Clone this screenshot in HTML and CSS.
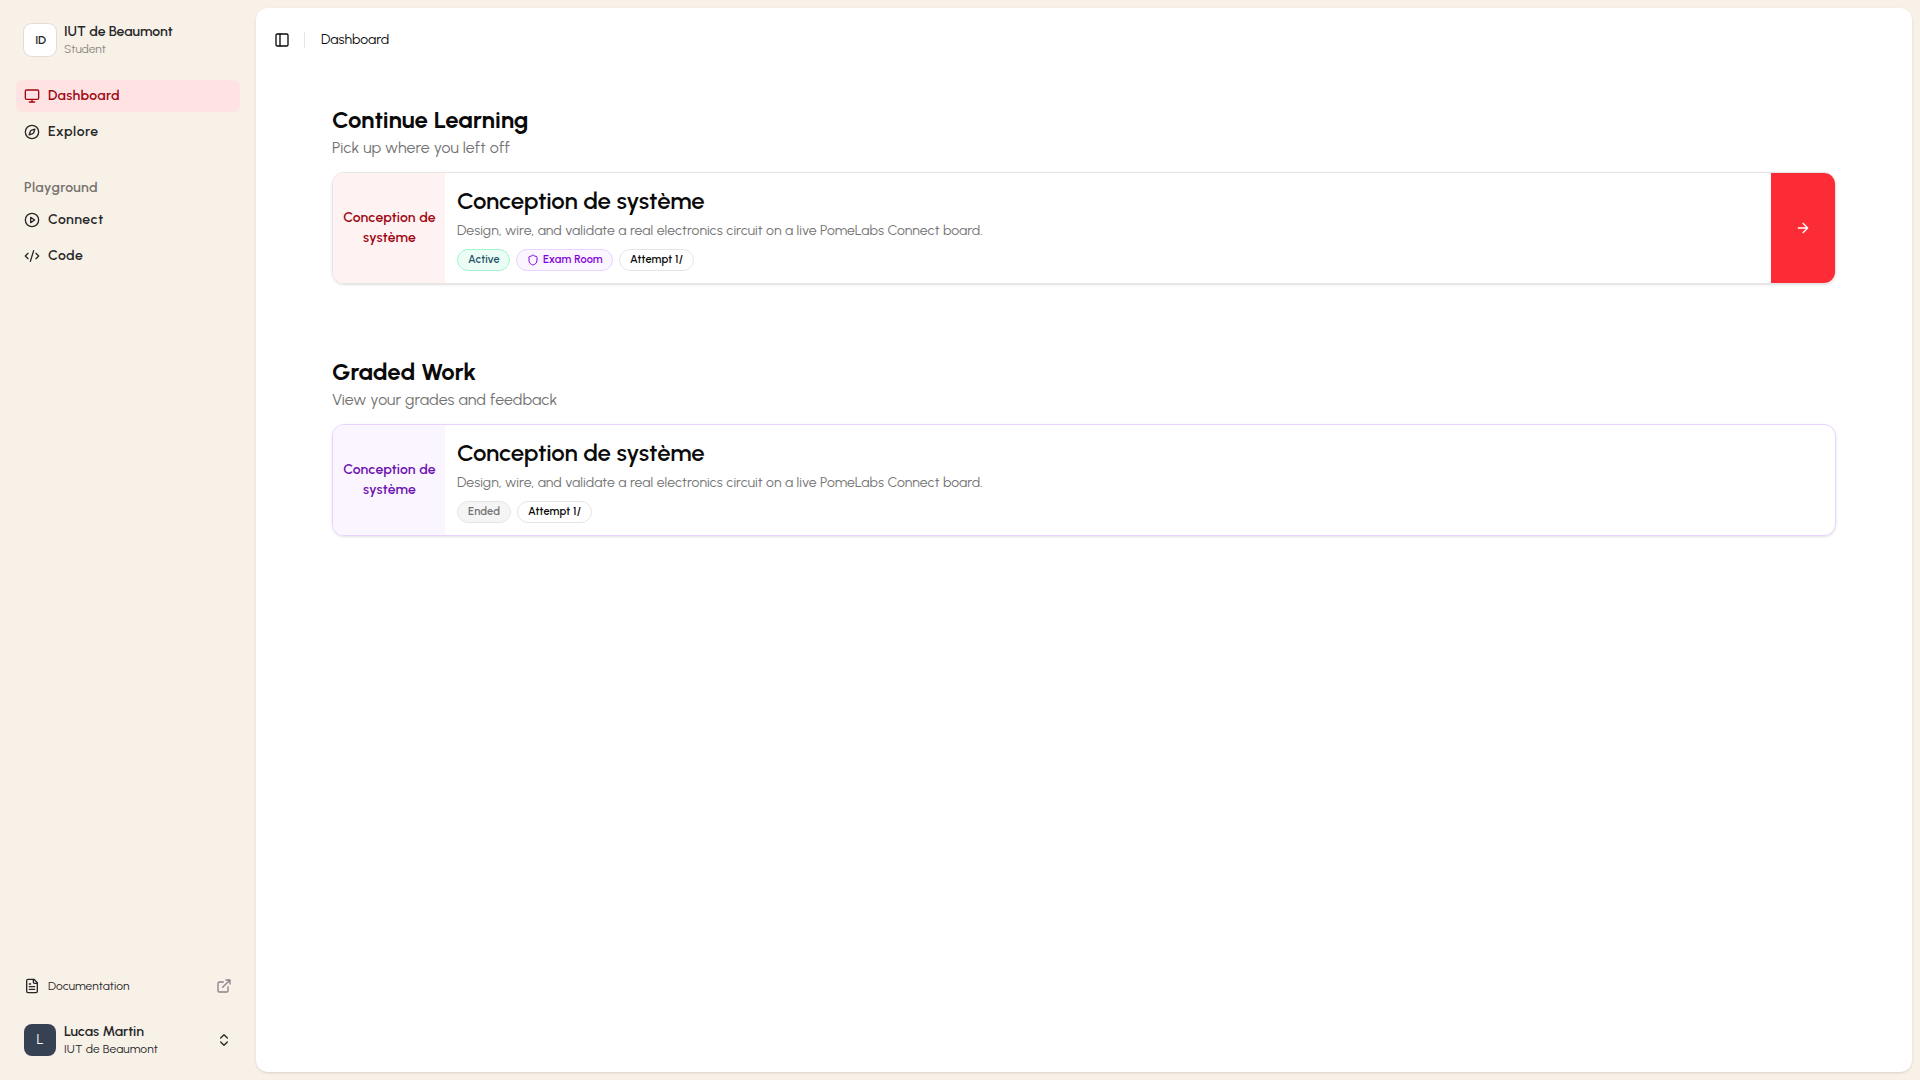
FILE: index.html
```
<!DOCTYPE html>
<html lang="en">
<head>
  <meta charset="UTF-8" />
  <title>Dashboard</title>
  <link rel="stylesheet" href="styles.css">
</head>
<body>
  <aside class="sidebar">
    <div class="org">
      <div class="org-logo">ID</div>
      <div class="who">
        <span class="who-name">IUT de Beaumont</span>
        <span class="who-sub muted">Student</span>
      </div>
    </div>

    <nav class="nav">
      <a class="nav-item active">
        <svg class="icon" viewBox="0 0 24 24"><rect width="20" height="14" x="2" y="3" rx="2"/><path d="M8 21h8M12 17v4"/></svg>
        <span>Dashboard</span>
      </a>
      <a class="nav-item explore">
        <svg class="icon" viewBox="0 0 24 24"><path d="m16.24 7.76-1.804 5.411a2 2 0 0 1-1.265 1.265L7.76 16.24l1.804-5.411a2 2 0 0 1 1.265-1.265z"/><circle cx="12" cy="12" r="10"/></svg>
        <span>Explore</span>
      </a>
    </nav>

    <div class="nav-label">Playground</div>
    <nav class="nav">
      <a class="nav-item connect">
        <svg class="icon" viewBox="0 0 24 24"><circle cx="12" cy="12" r="10"/><path d="m10 8 6 4-6 4z"/></svg>
        <span>Connect</span>
      </a>
      <a class="nav-item code">
        <svg class="icon" viewBox="0 0 24 24"><path d="m18 16 4-4-4-4M6 8l-4 4 4 4M14.5 4l-5 16"/></svg>
        <span>Code</span>
      </a>
    </nav>

    <div class="sidebar-footer">
      <a class="doc-link">
        <svg class="icon" viewBox="0 0 24 24"><path d="M15 2H6a2 2 0 0 0-2 2v16a2 2 0 0 0 2 2h12a2 2 0 0 0 2-2V7z"/><path d="M14 2v4a2 2 0 0 0 2 2h4M10 9H8M16 13H8M16 17H8"/></svg>
        <span>Documentation</span>
        <svg class="icon external" viewBox="0 0 24 24"><path d="M15 3h6v6M10 14 21 3M18 13v6a2 2 0 0 1-2 2H5a2 2 0 0 1-2-2V8a2 2 0 0 1 2-2h6"/></svg>
      </a>
      <div class="user">
        <div class="avatar">L</div>
        <div class="who">
          <span class="who-name">Lucas Martin</span>
          <span class="who-sub user-org">IUT de Beaumont</span>
        </div>
        <svg class="icon chevrons" viewBox="0 0 24 24"><path d="m7 15 5 5 5-5M7 9l5-5 5 5"/></svg>
      </div>
    </div>
  </aside>

  <main class="panel">
    <header class="topbar">
      <svg class="icon" viewBox="0 0 24 24"><rect width="18" height="18" x="3" y="3" rx="2"/><path d="M9 3v18"/></svg>
      <span class="divider"></span>
      <span>Dashboard</span>
    </header>

    <div class="content">
      <section>
        <h2>Continue Learning</h2>
        <p class="subtitle">Pick up where you left off</p>
        <article class="card">
          <div class="card-side red">Conception de système</div>
          <div class="card-body">
            <h3>Conception de système</h3>
            <p class="desc">Design, wire, and validate a real electronics circuit on a live PomeLabs Connect board.</p>
            <div class="badges">
              <span class="badge badge-active">Active</span>
              <span class="badge badge-exam">
                <svg class="icon" viewBox="0 0 24 24"><path d="M20 13c0 5-3.500 7.500-7.660 8.950a1 1 0 0 1-.67-.01C7.500 20.500 4 18 4 13V6a1 1 0 0 1 1-1c2 0 4.500-1.200 6.240-2.720a1.170 1.170 0 0 1 1.520 0C14.510 3.810 17 5 19 5a1 1 0 0 1 1 1z"/></svg>
                Exam Room
              </span>
              <span class="badge badge-attempt">Attempt 1/</span>
            </div>
          </div>
          <a class="card-go">
            <svg class="icon" viewBox="0 0 24 24"><path d="M5 12h14M12 5l7 7-7 7"/></svg>
          </a>
        </article>
      </section>

      <section>
        <h2>Graded Work</h2>
        <p class="subtitle">View your grades and feedback</p>
        <article class="card card-purple">
          <div class="card-side purple">Conception de système</div>
          <div class="card-body">
            <h3>Conception de système</h3>
            <p class="desc">Design, wire, and validate a real electronics circuit on a live PomeLabs Connect board.</p>
            <div class="badges">
              <span class="badge badge-ended">Ended</span>
              <span class="badge badge-attempt">Attempt 1/</span>
            </div>
          </div>
        </article>
      </section>
    </div>
  </main>
</body>
</html>
```

FILE: styles.css
```
* {
  box-sizing: border-box;
}
body {
  margin: 0;
  height: 100vh;
  display: flex;
  overflow: hidden;
  background: #f8f1e7;
  color: #0a0a0a;
  font-family: Urbanist, Lato, sans-serif;
  font-size: 14px;
  line-height: 20px;
}
h2, h3, p {
  margin: 0;
}
.icon {
  width: 16px;
  height: 16px;
  flex-shrink: 0;
  fill: none;
  stroke: currentColor;
  stroke-width: 2;
  stroke-linecap: round;
  stroke-linejoin: round;
}

/* Sidebar */
.sidebar {
  width: 256px;
  padding: 16px;
  display: flex;
  flex-direction: column;
  color: #27272a;
}
.org, .user {
  display: flex;
  align-items: center;
  gap: 8px;
  height: 48px;
  padding: 0 8px;
}
.org-logo, .avatar {
  width: 32px;
  height: 32px;
  border-radius: 8px;
  display: flex;
  align-items: center;
  justify-content: center;
  font-size: 12px;
}
.org-logo {
  padding-left: 1px;
  background: #fff;
  box-shadow: 0 0 0 1px #e4ddd5;
  font-weight: 600;
  letter-spacing: -0.2px;
}
.avatar {
  background: #364153;
  color: #fff;
  font-size: 14px;
}
.who {
  display: flex;
  flex-direction: column;
}
.who-name {
  font-weight: 600;
  line-height: 18px;
}
.who-sub {
  font-size: 12px;
  line-height: 16px;
}
.user-org {
  letter-spacing: 0.15px;
}
.muted {
  color: #8b8682;
}
.nav {
  display: flex;
  flex-direction: column;
  gap: 4px;
}
.org + .nav {
  margin-top: 16px;
}
.nav-item {
  display: flex;
  align-items: center;
  gap: 8px;
  height: 32px;
  padding: 0 8px 1px;
  border-radius: 6px;
  font-weight: 600;
  letter-spacing: 0.3px;
}
.explore {
  letter-spacing: 0.55px;
}
.connect, .code {
  letter-spacing: 0.5px;
}
.nav-item.active {
  background: #ffe2e2;
  color: #9f0712;
}
.nav-label {
  height: 32px;
  margin-top: 24px;
  padding: 0 8px;
  line-height: 31px;
  font-weight: 600;
  letter-spacing: 0.38px;
  color: #77726f;
}
.sidebar-footer {
  margin-top: auto;
}
.doc-link {
  display: flex;
  align-items: center;
  gap: 8px;
  height: 28px;
  margin-bottom: 16px;
  padding: 0 8px;
  font-size: 12px;
  letter-spacing: 0.05px;
}
.external {
  margin-left: auto;
  color: #8d8189;
}
.chevrons {
  margin-left: auto;
}

/* Main panel */
.panel {
  flex: 1;
  margin: 8px 8px 8px 0;
  background: #fff;
  border-radius: 12px;
  box-shadow: 0 1px 3px rgba(0, 0, 0, 0.1), 0 1px 2px -1px rgba(0, 0, 0, 0.1);
}
.topbar {
  display: flex;
  align-items: center;
  height: 64px;
  padding: 0 18px;
}
.divider {
  width: 1px;
  height: 16px;
  margin: 0 16px 0 14px;
  background: #e5e5e5;
}
.content {
  display: flex;
  flex-direction: column;
  gap: 72px;
  padding: 32px 76px;
}
h2 {
  font-size: 24px;
  line-height: 32px;
  font-weight: 700;
  letter-spacing: -0.04px;
}
.subtitle {
  margin-bottom: 12px;
  font-size: 16px;
  line-height: 24px;
  letter-spacing: 0.07px;
  color: #737373;
}

/* Cards */
.card {
  display: flex;
  height: 112px;
  overflow: hidden;
  border: 1px solid #e5e5e5;
  border-radius: 12px;
  box-shadow: 0 1px 3px rgba(0, 0, 0, 0.1), 0 1px 2px -1px rgba(0, 0, 0, 0.1);
}
.card-purple {
  border-color: #e9d4ff;
}
.card-side {
  width: 112px;
  padding: 0 7px 0 8px;
  display: flex;
  align-items: center;
  justify-content: center;
  text-align: center;
  font-weight: 600;
  letter-spacing: 0.15px;
}
.red {
  background: #fef2f2;
  color: #9f0712;
}
.purple {
  background: #faf5ff;
  color: #6e11b0;
}
.card-body {
  flex: 1;
  padding: 12px;
}
h3 {
  margin-bottom: 4px;
  font-size: 24px;
  line-height: 32px;
  font-weight: 600;
  letter-spacing: -0.12px;
}
.desc {
  margin-bottom: 8px;
  letter-spacing: 0.06px;
  color: #737373;
}
.badges {
  display: flex;
  gap: 6px;
}
.badge {
  display: flex;
  align-items: center;
  gap: 4px;
  height: 22px;
  padding: 0 10px 1px;
  border: 1px solid #e5e5e5;
  border-radius: 11px;
  font-size: 11px;
  line-height: 16px;
  font-weight: 600;
  letter-spacing: 0.15px;
  white-space: nowrap;
}
.badge .icon {
  width: 12px;
  height: 12px;
}
.badge-active {
  width: 53px;
  background: #ecfdf5;
  border-color: #a4f4cf;
  color: #24556b;
}
.badge-exam {
  width: 97px;
  background: #faf5ff;
  border-color: #e9d4ff;
  color: #8200db;
}
.badge-attempt {
  width: 75px;
}
.badge-ended {
  width: 54px;
  background: #f5f5f5;
  color: #737373;
}
.card-go {
  width: 64px;
  display: flex;
  align-items: center;
  justify-content: center;
  background: #fb2c36;
  color: #fff;
}
```
